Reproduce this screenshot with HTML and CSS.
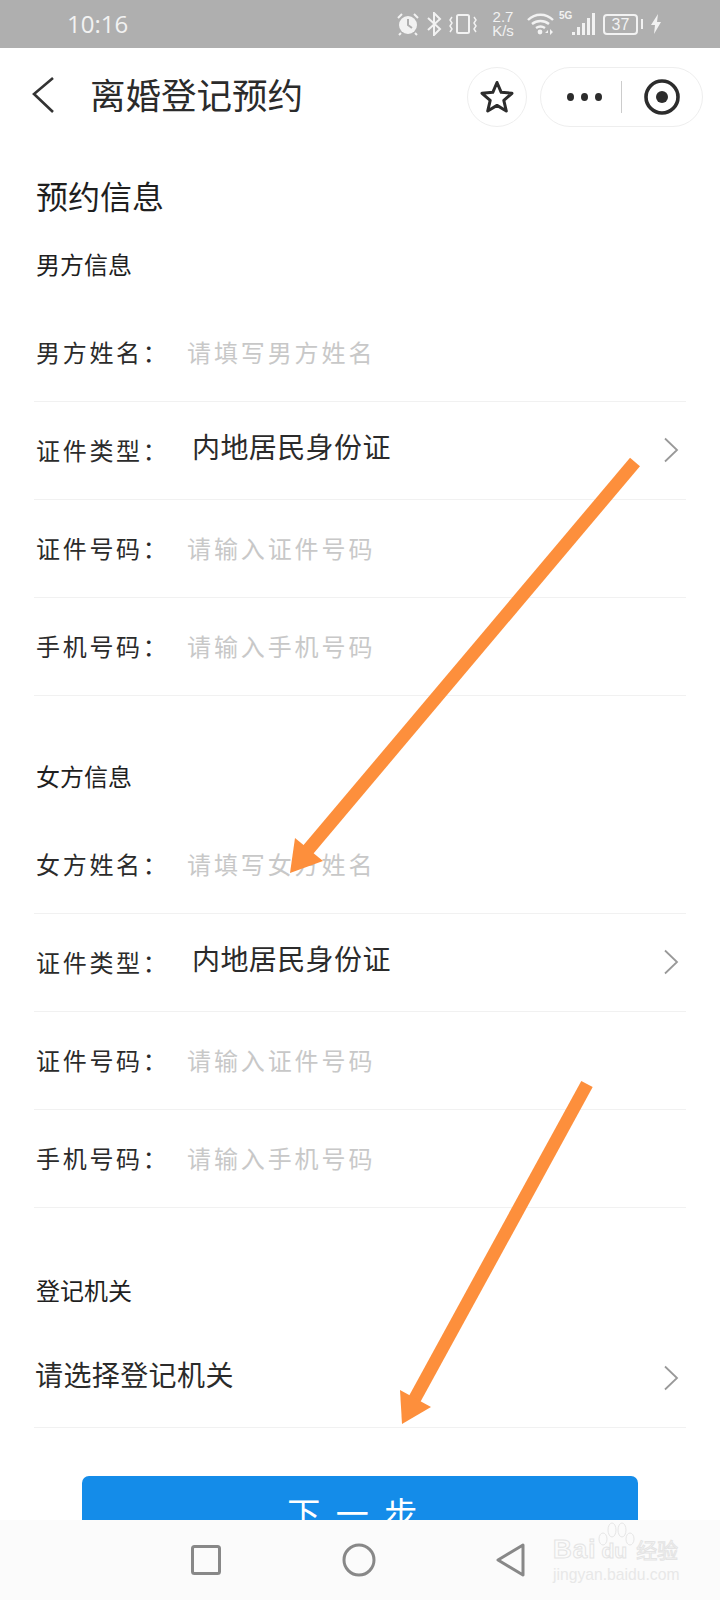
FILE: index.html
```html
<!DOCTYPE html>
<html lang="zh-CN">
<head>
<meta charset="utf-8">
<title>离婚登记预约</title>
<link rel="stylesheet" href="styles.css">
</head>
<body>
<div class="screen">
  <div class="status">
    <span class="time">10:16</span>
    <div class="status-icons">
      <svg class="si" width="26" height="24" viewBox="0 0 26 24"><path d="M3 6 7 2M23 6 19 2" stroke="#f2f2f2" stroke-width="2" fill="none"/><circle cx="13" cy="13" r="9" fill="#f2f2f2"/><path d="M13 7v6l4 3" stroke="#afafaf" stroke-width="2" fill="none"/><path d="M6 21l-2 2M20 21l2 2" stroke="#f2f2f2" stroke-width="2"/></svg>
      <svg class="si ic-bt" width="16" height="24" viewBox="0 0 16 24"><path d="M2 6l12 11-6 6V1l6 6L2 18" stroke="#f2f2f2" stroke-width="2" fill="none"/></svg>
      <svg class="si ic-vib" width="28" height="22" viewBox="0 0 28 22"><rect x="8" y="2" width="12" height="18" rx="1.500" stroke="#f2f2f2" stroke-width="2" fill="none"/><path d="M3 4 1 7l2 3-2 3 2 3 -2 3M25 4l2 3-2 3 2 3-2 3 2 3" stroke="#f2f2f2" stroke-width="1.500" fill="none"/></svg>
      <span class="speed">2.7<br>K/s</span>
      <svg class="si" width="28" height="22" viewBox="0 0 28 22"><path d="M1 7c7-7 18-7 25 0M5 11c5-4 12-4 17 0M9 15c3-2 6-2 9 0" stroke="#f2f2f2" stroke-width="2.400" fill="none"/><circle cx="13" cy="19" r="2.400" fill="#f2f2f2"/><path d="M21 17l-3 3h3zM23 16v6l3-3z" fill="#f2f2f2"/></svg>
      <div class="signal">
        <span class="fiveg">5G</span>
        <svg class="si" width="24" height="24" viewBox="0 0 24 24"><rect x="1" y="20" width="3" height="3" fill="#f2f2f2"/><rect x="6" y="15" width="3" height="8" fill="#f2f2f2"/><rect x="11" y="11" width="3" height="12" fill="#f2f2f2"/><rect x="16" y="6" width="3" height="17" fill="#f2f2f2"/><rect x="21" y="1" width="3" height="22" fill="#f2f2f2"/></svg>
      </div>
      <div class="battery"><span class="batt-box">37</span><span class="batt-nub"></span></div>
      <svg class="si bolt" width="10" height="20" viewBox="0 0 10 20"><path d="M7 0 0 11h4l-1 9 7-12H6z" fill="#f2f2f2"/></svg>
    </div>
  </div>

  <header class="nav">
    <svg class="back" width="24" height="38" viewBox="0 0 24 38"><path d="M21 2 2 18l19 18" stroke="#333" stroke-width="2.600" fill="none"/></svg>
    <h1 class="nav-title">离婚登记预约</h1>
    <div class="nav-actions">
      <div class="star-btn">
        <svg width="34" height="34" viewBox="0 0 34 34"><path d="M17 2.500 21.200 12.300 32 13.300 23.800 20.400 26.300 31 17 25.400 7.700 31 10.200 20.400 2 13.300 12.800 12.300Z" stroke="#2c2c2c" stroke-width="3" stroke-linejoin="round" fill="none"/></svg>
      </div>
      <div class="capsule">
        <span class="dots"><i></i><i></i><i></i></span>
        <span class="cap-div"></span>
        <svg width="38" height="38" viewBox="0 0 38 38"><circle cx="19" cy="19" r="16" stroke="#2c2c2c" stroke-width="3.600" fill="none"/><circle cx="19" cy="19" r="6" fill="#2c2c2c"/></svg>
      </div>
    </div>
  </header>

  <main class="content">
    <h2 class="page-title">预约信息</h2>

    <section>
      <h3 class="sec-title">男方信息</h3>
      <div class="row"><span class="label">男方姓名：</span><span class="ph">请填写男方姓名</span></div>
      <div class="row"><span class="label">证件类型：</span><span class="val">内地居民身份证</span><svg class="chev" width="16" height="26" viewBox="0 0 16 26"><path d="M2 1.500 14 13 2 24.500" stroke="#999" stroke-width="1.800" fill="none"/></svg></div>
      <div class="row"><span class="label">证件号码：</span><span class="ph">请输入证件号码</span></div>
      <div class="row"><span class="label">手机号码：</span><span class="ph">请输入手机号码</span></div>
    </section>

    <section class="sec-next">
      <h3 class="sec-title">女方信息</h3>
      <div class="row"><span class="label">女方姓名：</span><span class="ph">请填写女方姓名</span></div>
      <div class="row"><span class="label">证件类型：</span><span class="val">内地居民身份证</span><svg class="chev" width="16" height="26" viewBox="0 0 16 26"><path d="M2 1.500 14 13 2 24.500" stroke="#999" stroke-width="1.800" fill="none"/></svg></div>
      <div class="row"><span class="label">证件号码：</span><span class="ph">请输入证件号码</span></div>
      <div class="row"><span class="label">手机号码：</span><span class="ph">请输入手机号码</span></div>
    </section>

    <section class="sec-last">
      <h3 class="sec-title">登记机关</h3>
      <div class="row"><span class="val val-flush">请选择登记机关</span><svg class="chev" width="16" height="26" viewBox="0 0 16 26"><path d="M2 1.500 14 13 2 24.500" stroke="#999" stroke-width="1.800" fill="none"/></svg></div>
    </section>

    <button class="next">下一步</button>
  </main>

  <svg class="arrows" width="720" height="1600" viewBox="0 0 720 1600">
    <path d="M635 462 302 857" stroke="#fd8f3c" stroke-width="13" fill="none"/>
    <path d="M290 873 295 838 323 861Z" fill="#fd8f3c"/>
    <path d="M587 1084 413 1402" stroke="#fd8f3c" stroke-width="13" fill="none"/>
    <path d="M402 1424 400 1390 431 1407Z" fill="#fd8f3c"/>
  </svg>

  <footer class="sysnav">
    <svg width="30" height="30" viewBox="0 0 30 30"><rect x="1.500" y="1.500" width="27" height="27" rx="2" stroke="#888" stroke-width="3" fill="none"/></svg>
    <svg width="34" height="34" viewBox="0 0 34 34"><circle cx="17" cy="17" r="15" stroke="#888" stroke-width="3" fill="none"/></svg>
    <svg width="30" height="34" viewBox="0 0 30 34"><path d="M27 2 2 17l25 15Z" stroke="#888" stroke-width="3" stroke-linejoin="round" fill="none"/></svg>
  </footer>

  <div class="watermark">
    <div class="wm-top">
      <span class="wm-logo">Bai</span>
      <span class="wm-logo wm-du">du</span>
      <span class="wm-cn">经验</span>
      <svg class="wm-paw" width="38" height="24" viewBox="0 0 38 24"><ellipse cx="6" cy="17" rx="4" ry="6" fill="none" stroke="#e6e6e6"/><ellipse cx="15" cy="8" rx="4" ry="7" fill="none" stroke="#e6e6e6"/><ellipse cx="25" cy="8" rx="4" ry="7" fill="none" stroke="#e6e6e6"/><ellipse cx="33" cy="17" rx="4" ry="6" fill="none" stroke="#e6e6e6"/></svg>
    </div>
    <div class="wm-url">jingyan.baidu.com</div>
  </div>
</div>
</body>
</html>
```

FILE: styles.css
```css
* { box-sizing: border-box; }
html, body { margin: 0; padding: 0; background: #fff; }
body { font-family: "Noto Sans CJK SC", "Noto Sans", sans-serif; color: #2b2b2b; }
.screen { position: relative; width: 720px; height: 1600px; overflow: hidden; background: #fff; }

.status { height: 48px; background: #afafaf; display: flex; align-items: center; justify-content: space-between; padding: 0 59px 0 67px; color: #f2f2f2; }
.time { font-family: "Open Sans", sans-serif; font-size: 24px; line-height: 48px; }
.status-icons { display: flex; align-items: center; }
.si { display: block; flex: none; }
.ic-bt { margin-left: 5px; }
.ic-vib { margin-left: 7px; }
.speed { font-family: "Liberation Sans", sans-serif; font-size: 15px; line-height: 14px; width: 24px; text-align: center; margin: 0 12px 0 14px; }
.signal { display: flex; align-items: flex-end; position: relative; padding-left: 12px; margin-left: 4px; }
.fiveg { position: absolute; left: 0; top: -2px; font-family: "Liberation Sans", sans-serif; font-size: 10px; font-weight: 700; line-height: 11px; }
.battery { display: flex; align-items: center; gap: 3px; margin-left: 8px; }
.batt-box { display: block; width: 35px; height: 21px; border: 2px solid #f2f2f2; border-radius: 4px; font-family: "Liberation Sans", sans-serif; font-size: 16px; line-height: 17px; text-align: center; }
.batt-nub { display: block; width: 2px; height: 10px; background: #f2f2f2; }
.bolt { margin-left: 8px; }

.nav { height: 94px; display: flex; align-items: center; padding: 0 17px 0 32px; }
.back { flex: none; display: block; }
.nav-title { margin: 0 0 3px 34px; flex: 1; font-size: 35.500px; line-height: 46px; font-weight: 400; color: #2b2b2b; }
.nav-actions { display: flex; align-items: center; gap: 13px; padding-top: 3px; }
.star-btn { width: 60px; height: 60px; border: 1px solid #eee; border-radius: 50%; display: flex; align-items: center; justify-content: center; }
.capsule { width: 163px; height: 60px; border: 1px solid #eee; border-radius: 30px; display: flex; align-items: center; padding-left: 26px; }
.dots { display: flex; gap: 7px; width: 35px; }
.dots i { display: block; width: 8px; height: 8px; border-radius: 50%; background: #2c2c2c; }
.cap-div { display: block; width: 1px; height: 32px; background: #ccc; margin-left: 19px; }
.capsule svg { display: block; margin-left: 21px; }

.content { padding: 31px 34px 0; }
.page-title { margin: 0 0 31px; font-size: 32px; line-height: 44px; font-weight: 400; color: #1f1f1f; padding-left: 2px; }
.sec-title { margin: 0 0 24px; font-size: 24px; line-height: 32px; font-weight: 400; color: #1f1f1f; padding-left: 2px; }
.sec-next { margin-top: 64px; }
.sec-last { margin-top: 66px; }
.row { height: 98px; border-bottom: 1px solid #f1f1f1; display: flex; align-items: center; padding: 0 0 3px 2px; position: relative; }
.label { width: 151px; flex: none; font-size: 24px; letter-spacing: 2.700px; color: #2b2b2b; }
.ph { font-size: 24px; letter-spacing: 2.900px; color: #c8c8c8; }
.val { font-size: 28px; line-height: 40px; letter-spacing: 0.400px; color: #2b2b2b; margin-left: 5px; padding-bottom: 6px; }
.val-flush { margin-left: -1px; }
.chev { position: absolute; right: 7px; top: 35px; display: block; }

.next { display: block; width: 556px; height: 72px; margin: 48px auto 0; border: 0; border-radius: 7px; background: #148ce9; color: #fff; font-family: inherit; font-size: 33px; letter-spacing: 15.500px; padding: 0; }

.arrows { position: absolute; left: 0; top: 0; pointer-events: none; }

.sysnav { position: absolute; left: 0; right: 0; bottom: 0; height: 80px; background: #fbfbfb; display: flex; align-items: center; padding: 0 194px 0 191px; justify-content: space-between; }
.sysnav svg { display: block; }

.watermark { position: absolute; left: 553px; top: 1522px; width: 130px; height: 64px; }
.wm-top { display: flex; align-items: baseline; padding-top: 13px; height: 44px; position: relative; }
.wm-logo { font-family: "Liberation Sans", sans-serif; font-size: 26px; line-height: 28px; font-weight: 700; letter-spacing: 1px; color: #fbfbfb; -webkit-text-stroke: 1px #e4e4e4; }
.wm-du { margin-left: 5px; font-size: 21px; letter-spacing: 0; }
.wm-cn { font-size: 21px; line-height: 28px; color: #fbfbfb; -webkit-text-stroke: 1px #e4e4e4; margin-left: 9px; }
.wm-paw { position: absolute; left: 44px; top: 0; }
.wm-url { font-family: "Liberation Sans", sans-serif; font-size: 15.700px; line-height: 18px; color: #e8e8e8; }
```
